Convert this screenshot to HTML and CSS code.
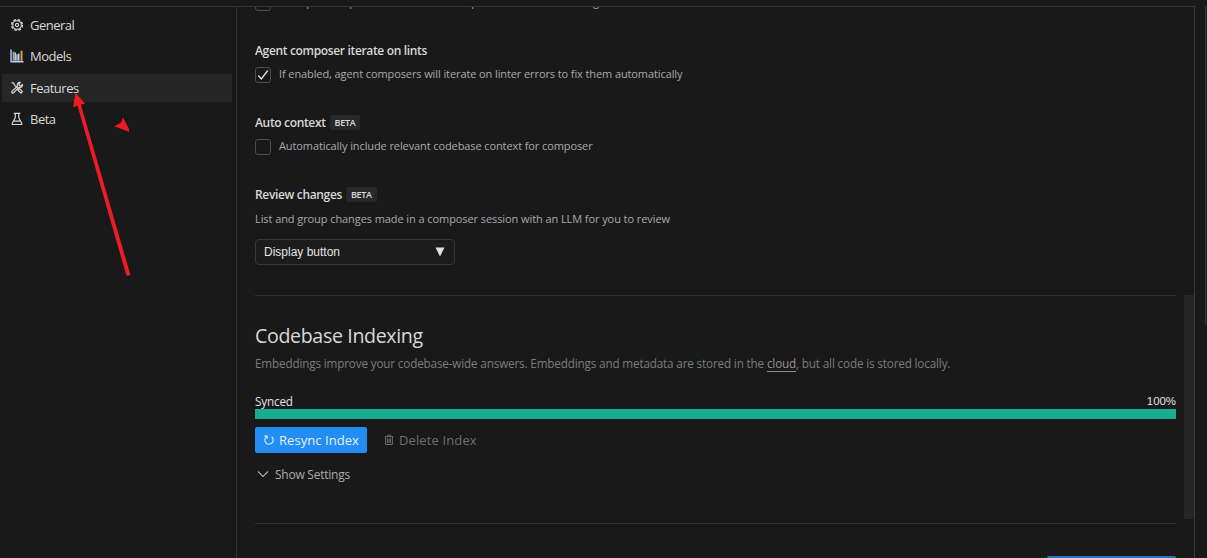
FILE: index.html
```html
<!DOCTYPE html>
<html lang="en">
<head>
<meta charset="utf-8">
<title>Settings</title>
<link rel="stylesheet" href="styles.css">
</head>
<body>
<div class="window">
  <div class="panel">
    <nav class="sidebar">
      <a class="item"><svg class="icon" viewBox="0 0 16 16"><g fill="none" stroke="currentColor"><circle cx="8" cy="8" r="6.1" stroke-width="1.7" stroke-dasharray="2.9 1.89"/><circle cx="8" cy="8" r="4.9" stroke-width="1.2"/><circle cx="8" cy="8" r="1.8" stroke-width="1.3"/></g></svg><span>General</span></a>
      <a class="item"><svg class="icon" viewBox="0 0 16 16"><path d="M1.200.500v14H15.500" fill="none" stroke="#b9cfe6" stroke-width="1.600"/><path d="M4 3v10.500M8 6v7.500" stroke="#7fb0ea" stroke-width="2"/><path d="M6 4v9.500M10 5v8.500" stroke="#dccbb0" stroke-width="1.700"/><path d="M13.200 2v11.500" stroke="#d0a566" stroke-width="2.200"/></svg><span>Models</span></a>
      <a class="item active"><svg class="icon" viewBox="0 0 16 16"><g fill="none" stroke="currentColor" stroke-width="1.4" stroke-linejoin="round"><path d="M1.800 1.800l2.500.700.600 1.900 4 4M9.600 9.200l1.300-.300 3.300 3.300-1.700 1.700-3.300-3.300z"/><path d="M14.300 4.100a3.200 3.200 0 0 1-4.300 3.300L4 13.600a1.300 1.300 0 0 1-1.800-1.800L8.400 6a3.200 3.200 0 0 1 3.400-4.300l-1.500 2 .400 1.600 1.600.400z"/></g></svg><span>Features</span></a>
      <a class="item"><svg class="icon" viewBox="0 0 16 16"><path d="M4.300 1.500h7.400M6 1.500v5L2.500 13q-.5 1.300.8 1.300h9.400q1.300 0 .8-1.300L10 6.500v-5M4.500 10.500h7" fill="none" stroke="currentColor" stroke-width="1.35"/></svg><span>Beta</span></a>
    </nav>
    <main class="content">
      <section class="setting clipped">
        <h3 class="name">Auto-parse</h3>
        <label class="option"><i class="box"></i><span>Auto-parse in plain context of the composer sessions and also globs</span></label>
      </section>
      <section class="setting">
        <h3 class="name">Agent composer iterate on lints</h3>
        <label class="option"><i class="box"><svg viewBox="0 0 14 14"><path d="M2.300 7.500l3 3.500 6.500-8.500" fill="none" stroke="#e4e4e4" stroke-width="1.300"/></svg></i><span>If enabled, agent composers will iterate on linter errors to fix them automatically</span></label>
      </section>
      <section class="setting">
        <h3 class="name">Auto context<span class="tag">BETA</span></h3>
        <label class="option"><i class="box"></i><span>Automatically include relevant codebase context for composer</span></label>
      </section>
      <section class="setting review">
        <h3 class="name">Review changes<span class="tag">BETA</span></h3>
        <p class="hint">List and group changes made in a composer session with an LLM for you to review</p>
        <div class="select"><span>Display button</span><svg class="caret" viewBox="0 0 10 10"><path d="M.5.5h9L5 9.500z" fill="#e0e0e0"/></svg></div>
      </section>
      <section class="indexing">
        <h2 class="title">Codebase Indexing</h2>
        <p class="about">Embeddings improve your codebase-wide answers. Embeddings and metadata are stored in the <a class="link">cloud</a>, but all code is stored locally.</p>
        <div class="status"><span class="synced">Synced</span><span class="percent">100%</span></div>
        <div class="bar"></div>
        <div class="actions">
          <button class="button primary"><svg class="glyph" viewBox="0 0 12 12"><path d="M3.600 2.600A4.200 4.200 0 1 0 8.600 2.700M1.300 2h2.800v2.800" fill="none" stroke="currentColor" stroke-width="1.100"/></svg>Resync Index</button>
          <button class="button quiet"><svg class="glyph" viewBox="0 0 12 12"><path d="M1.500 2.700h9M4.300 2.500V1.200h3.400v1.300M2.600 3v7.500h6.800V3M4.600 4.500v4.500M6 4.500v4.500M7.400 4.500v4.500" fill="none" stroke="currentColor"/></svg>Delete Index</button>
        </div>
        <div class="more"><svg class="chevron" viewBox="0 0 12 12"><path d="M1 3.500l5 5 5-5" fill="none" stroke="currentColor" stroke-width="1.100"/></svg>Show Settings</div>
      </section>
      <section class="next"><button class="button wide"></button></section>
      <div class="scroll-thumb"></div>
    </main>
  </div>
  <div class="gutter"><div class="outer-thumb"></div></div>
  <svg class="annotation" viewBox="0 0 1207 558"><g fill="#ed1c24"><path d="M75.500 93L85.300 103.800 80.800 104.600 130.200 274.300Q129 276.800 126.300 275.300L77.500 105.800 73 107.500z"/><path d="M123 117.500L129 129V131.800L114.200 126.300 121 122.700z"/></g></svg>
</div>
</body>
</html>
```
FILE: styles.css
```css
* { box-sizing: border-box; }
body {
  margin: 0;
  background: #191919;
  color: #d8d8d8;
  font-family: "Open Sans", "Noto Sans", sans-serif;
  overflow: hidden;
}
h2, h3, p { margin: 0; font-weight: 400; }
.window {
  position: relative;
  display: flex;
  width: 1207px;
  height: 558px;
  padding-top: 6px;
  overflow: hidden;
}
.panel {
  display: flex;
  width: 1195px;
  border-top: 1px solid #353535;
}
.sidebar {
  display: flex;
  flex-direction: column;
  gap: 3px;
  width: 237px;
  padding: 4px 4px 0 2px;
  border-right: 1px solid #303030;
}
.item {
  display: flex;
  flex: none;
  align-items: center;
  gap: 6px;
  height: 28px;
  padding-left: 8px;
  border-radius: 2px;
  font-size: 13px;
  line-height: 18px;
  letter-spacing: -0.500px;
}
.active { margin-top: 1px; background: #262626; }
.icon { width: 14px; height: 14px; }
.content {
  position: relative;
  width: 958px;
  height: 551px;
  padding: 0 18px;
  border-right: 1px solid #3a3a3a;
  overflow: hidden;
}
.setting { height: 72px; }
.clipped { margin-top: -38px; }
.name {
  display: flex;
  align-items: center;
  gap: 4px;
  height: 20px;
  padding-bottom: 1px;
  font-size: 12px;
  font-weight: 600;
  line-height: 17px;
  letter-spacing: -0.340px;
}
.tag {
  height: 15px;
  padding: 0 5px;
  border-radius: 2px;
  background: #28282b;
  font-size: 9px;
  line-height: 15px;
  letter-spacing: -0.300px;
}
.option {
  display: flex;
  gap: 8px;
  height: 16px;
  margin-top: 6px;
  color: #a9a9a9;
  font-size: 11px;
  line-height: 14px;
  letter-spacing: -0.100px;
  white-space: nowrap;
}
.box {
  width: 16px;
  height: 16px;
  border: 1px solid #4c4c4c;
  border-radius: 3px;
  line-height: 0;
}
.review {
  height: 111px;
  border-bottom: 1px solid #303030;
}
.hint {
  margin-top: 7px;
  color: #a9a9a9;
  font-size: 11px;
  line-height: 14px;
  letter-spacing: -0.080px;
}
.select {
  display: flex;
  align-items: center;
  justify-content: space-between;
  width: 200px;
  height: 26px;
  margin-top: 13px;
  padding: 0 9px 0 8px;
  border: 1px solid #373737;
  border-radius: 4px;
  background: #1c1c1c;
  color: #e4e4e4;
  font: 12px "Liberation Sans", sans-serif;
}
.caret { width: 10px; height: 10px; }
.indexing {
  height: 228px;
  padding-top: 26px;
  border-bottom: 1px solid #303030;
}
.title {
  font-size: 19.600px;
  line-height: 28px;
  letter-spacing: -0.350px;
}
.about {
  margin-top: 5px;
  color: #7c7c7c;
  font-size: 11.700px;
  line-height: 17px;
  letter-spacing: -0.150px;
}
.link { border-bottom: 1px solid #8c8c8c; color: #929292; }
.status {
  display: flex;
  justify-content: space-between;
  height: 16px;
  margin-top: 21px;
  color: #e2e2e2;
  font-size: 11.700px;
  line-height: 17px;
}
.synced { letter-spacing: -0.150px; }
.percent { font: 11.400px/16px "Liberation Sans", sans-serif; }
.bar { height: 10px; background: #18ad91; }
.actions { display: flex; gap: 8px; margin-top: 8px; }
.button {
  display: flex;
  align-items: center;
  height: 26px;
  padding: 0 8px;
  border: 0;
  border-radius: 2px;
  background: none;
  color: inherit;
  font: 13px "Open Sans", sans-serif;
}
.glyph { width: 12px; height: 12px; margin-right: 4px; }
.primary { width: 112px; background: #228df2; color: #e8f2fc; letter-spacing: 0.060px; }
.quiet { color: #6e6e6e; letter-spacing: 0.120px; }
.more {
  display: flex;
  align-items: center;
  gap: 6px;
  height: 16px;
  margin-top: 13px;
  padding-left: 2px;
  color: #acacac;
  font-size: 12px;
  letter-spacing: -0.240px;
}
.chevron { width: 12px; height: 12px; }
.next { display: flex; justify-content: flex-end; padding-top: 32px; }
.wide { width: 129px; background: #2376c4; }
.scroll-thumb {
  position: absolute;
  top: 288px;
  right: 0;
  width: 10px;
  height: 224px;
  background: #262626;
}
.gutter { display: flex; justify-content: flex-end; width: 12px; }
.outer-thumb {
  width: 2px;
  height: 319px;
  border-left: 1px solid #3a3a3a;
  border-radius: 0 0 0 2px;
}
.annotation {
  position: absolute;
  top: 0;
  left: 0;
  width: 1207px;
  height: 558px;
}
```
